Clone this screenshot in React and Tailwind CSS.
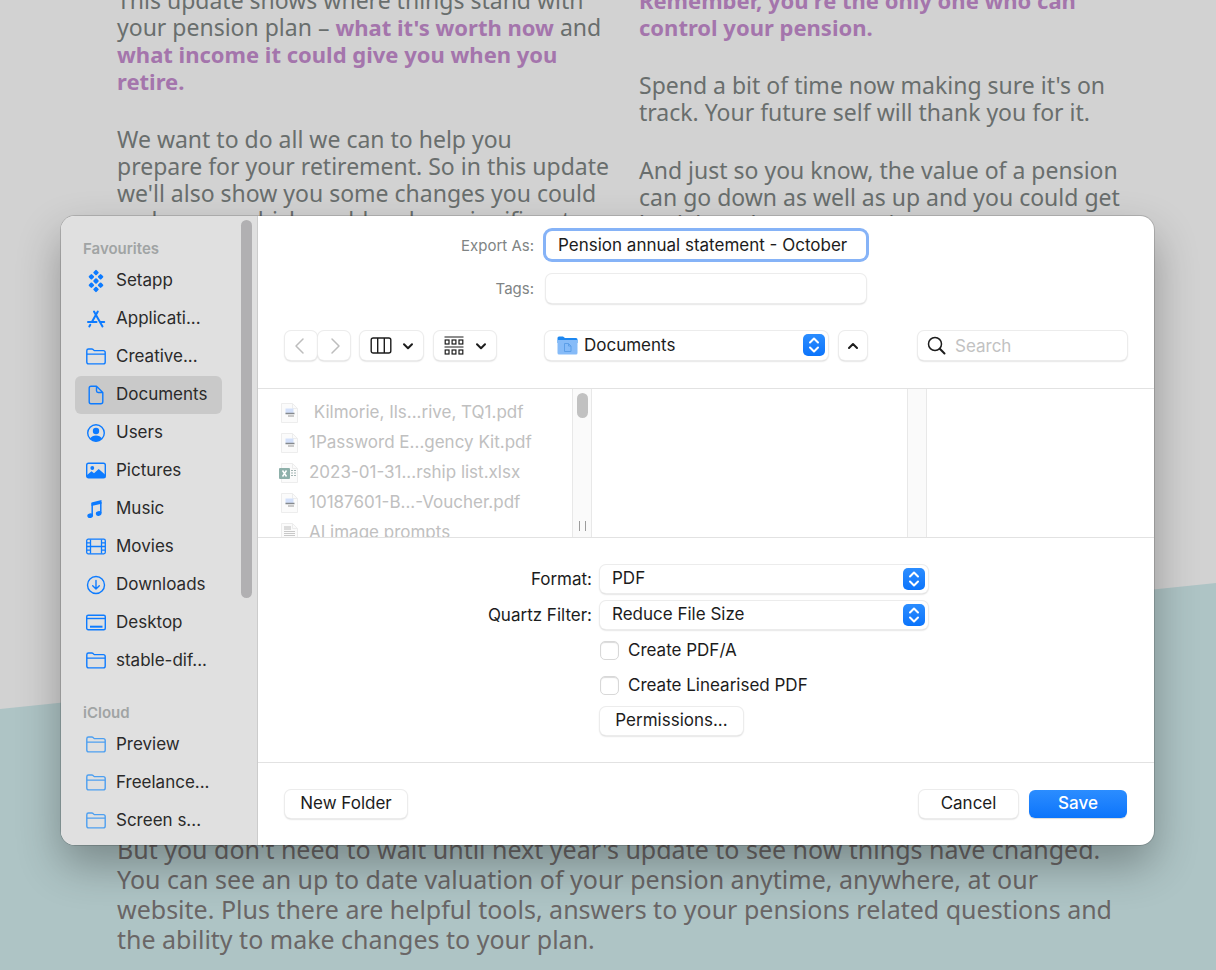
import { useState } from 'react';

const FAVOURITES = [
  { name: 'Setapp', icon: SetappIcon },
  { name: 'Applicati...', icon: AppsIcon },
  { name: 'Creative...', icon: FolderIcon },
  { name: 'Documents', icon: DocumentIcon },
  { name: 'Users', icon: UserIcon },
  { name: 'Pictures', icon: PictureIcon },
  { name: 'Music', icon: MusicIcon },
  { name: 'Movies', icon: MovieIcon },
  { name: 'Downloads', icon: DownloadIcon },
  { name: 'Desktop', icon: DesktopIcon },
  { name: 'stable-dif...', icon: FolderIcon },
];

const ICLOUD = ['Preview', 'Freelance...', 'Screen s...'];

const FILES = [
  { name: '\u00a0Kilmorie, Ils...rive, TQ1.pdf', type: 'pdf' },
  { name: '1Password E...gency Kit.pdf', type: 'pdf' },
  { name: '2023-01-31...rship list.xlsx', type: 'xlsx' },
  { name: '10187601-B...-Voucher.pdf', type: 'pdf' },
  { name: 'AI image prompts', type: 'text' },
];

const CONTROL = 'bg-white rounded-md shadow-[0_0_0_1px_#ececec,0_1px_2px_rgba(0,0,0,0.3)]';

export default function App() {
  return (
    <div className="relative h-screen min-h-[960px] overflow-hidden bg-[#d2d2d2]">
      <Statement />
      <div className="absolute inset-0 pl-[61px] pr-[62px] pt-[216px]">
        <ExportDialog />
      </div>
    </div>
  );
}

function Statement() {
  return (
    <div className="relative h-full font-['Noto_Sans','Open_Sans',sans-serif] text-[#696e6d]">
      <svg className="absolute inset-0 w-full h-full" viewBox="0 0 1216 970" preserveAspectRatio="none" aria-hidden="true">
        <path d="M0 709L1216 583V970H0Z" fill="#aec4c5" />
      </svg>
      <div className="relative h-full flex flex-col justify-between px-[117px] pb-4">
        <div className="-mt-[13px] grid grid-cols-[510px_510px] gap-3 text-[23px] leading-[27px] whitespace-nowrap">
          <div className="space-y-[31px]">
            <p>
              This update shows where things stand with<br />
              your pension plan – <Strong>what it's worth now</Strong> and<br />
              <Strong>what income it could give you when you</Strong><br />
              <Strong>retire.</Strong>
            </p>
            <p>
              We want to do all we can to help you<br />
              prepare for your retirement. So in this update<br />
              we'll also show you some changes you could<br />
              make now, which could make a significant
            </p>
          </div>
          <div className="space-y-[31px]">
            <p>
              <Strong>Remember, you're the only one who can</Strong><br />
              <Strong>control your pension.</Strong>
            </p>
            <p>
              Spend a bit of time now making sure it's on<br />
              track. Your future self will thank you for it.
            </p>
            <p>
              And just so you know, the value of a pension<br />
              can go down as well as up and you could get<br />
              back less than was put in.
            </p>
          </div>
        </div>
        <p className="text-[25px] leading-[30px] whitespace-nowrap text-[#6a6666]">
          But you don't need to wait until next year's update to see how things have changed.<br />
          You can see an up to date valuation of your pension anytime, anywhere, at our<br />
          website. Plus there are helpful tools, answers to your pensions related questions and<br />
          the ability to make changes to your plan.
        </p>
      </div>
    </div>
  );
}

function Strong({ children }) {
  return <strong className="font-bold text-[22px] text-[#a475ac]">{children}</strong>;
}

function ExportDialog() {
  const [name, setName] = useState('Pension annual statement - October');

  return (
    <div
      role="dialog"
      aria-label="Export"
      className="flex overflow-hidden rounded-[14px] bg-white font-['Inter','Liberation_Sans',sans-serif] text-[17px] text-[#1c1c1c] shadow-[0_0_0_1px_rgba(0,0,0,0.15),0_20px_44px_rgba(0,0,0,0.3)]"
    >
      <Sidebar />
      <div className="flex-1 min-w-0">
        <div className="px-[27px] pt-[15px] pb-7 border-b border-[#e2e2e2]">
          <div className="grid grid-cols-[1fr_320px_1fr] gap-x-3 gap-y-[15px] items-center">
            <label htmlFor="export-as" className="pt-0.5 text-right text-[15px] text-[#808484]">Export As:</label>
            <div className="h-7 px-3 flex bg-white rounded-md ring-3 ring-[#86b3f7]">
              <input
                id="export-as"
                type="text"
                value={name}
                onChange={(e) => setName(e.target.value)}
                className="w-full pt-0.5 bg-transparent focus:outline-none"
              />
            </div>
            <span />
            <label htmlFor="tags" className="pt-0.5 text-right text-[15px] text-[#808484]">Tags:</label>
            <input id="tags" type="text" className={`h-[29px] px-3 focus:outline-none ${CONTROL}`} />
          </div>
          <Toolbar />
        </div>
        <Browser />
        <Options />
        <div className="flex items-center px-[27px] py-[27px] gap-[11px]">
          <button className={`h-7 w-[122px] mr-auto ${CONTROL}`}>New Folder</button>
          <button className={`h-7 w-[99px] ${CONTROL}`}>Cancel</button>
          <button className="h-7 w-[98px] rounded-md bg-linear-to-b from-[#2b8dff] to-[#0a74fb] text-white font-medium shadow-[0_1px_1px_rgba(0,0,0,0.15)]">
            Save
          </button>
        </div>
      </div>
    </div>
  );
}

function Sidebar() {
  return (
    <div className="w-[197px] shrink-0 flex bg-[#e0e0e0] border-r border-[#cccccc]">
      <nav className="w-[180px] pt-5 pl-[14px] pr-[19px]">
        <h2 className="h-[26px] pl-2 text-[15px] leading-[26px] font-semibold text-[#a0a4a4]">Favourites</h2>
        {FAVOURITES.map(({ name, icon: Icon }) => (
          <SidebarItem key={name} name={name} selected={name === 'Documents'}>
            <Icon className="w-5 h-5 shrink-0 text-[#0d7bff]" />
          </SidebarItem>
        ))}
        <h2 className="mt-5 h-[26px] pl-2 text-[15px] leading-[26px] font-semibold text-[#a0a4a4]">iCloud</h2>
        {ICLOUD.map((name) => (
          <SidebarItem key={name} name={name}>
            <FolderIcon className="w-5 h-5 shrink-0 text-[#4d9ff0]" />
          </SidebarItem>
        ))}
      </nav>
      <div className="mt-1 w-[11px] h-[378px] rounded-full bg-[#b1b0b2]" />
    </div>
  );
}

function SidebarItem({ name, selected, children }) {
  return (
    <button
      className={`flex items-center gap-[10px] w-full h-[38px] pl-[11px] rounded-md text-left whitespace-nowrap text-[#2a2a2a] ${
        selected ? 'bg-[#c9c9c9]' : ''
      }`}
    >
      {children}
      {name}
    </button>
  );
}

function Toolbar() {
  return (
    <div className="mt-7 grid grid-cols-[1fr_322px_1fr] items-center">
      <div className="flex">
        <button aria-label="Back" className={`h-[29px] w-8 mr-px flex items-center justify-center text-[#bdbdbd] ${CONTROL}`}>
          <Chevron className="w-5 h-5" d="M12 3L5 10l7 7" thin />
        </button>
        <button aria-label="Forward" className={`h-[29px] w-8 mr-[10px] flex items-center justify-center text-[#bdbdbd] ${CONTROL}`}>
          <Chevron className="w-5 h-5" d="M8 3l7 7-7 7" thin />
        </button>
        <button aria-label="View" className={`h-[29px] w-[63px] mr-[11px] flex items-center justify-center gap-[10px] ${CONTROL}`}>
          <svg className="w-[22px] h-5" viewBox="0 0 22 20" fill="none" stroke="currentColor" strokeWidth="1.4">
            <rect x="1.2" y="2" width="19.6" height="15" rx="2" />
            <path d="M7.7 2v15M14.3 2v15" />
          </svg>
          <Chevron className="w-3 h-3" d="M2 4.3l4 4 4-4" small />
        </button>
        <button aria-label="Group" className={`h-[29px] w-[62px] flex items-center justify-center gap-[10px] ${CONTROL}`}>
          <svg className="w-[22px] h-5" viewBox="0 0 22 20" fill="none" stroke="currentColor" strokeWidth="1.2">
            <path d="M1.5 1h19M1.5 11h19" />
            <rect x="2.2" y="4" width="3.8" height="4" />
            <rect x="9.1" y="4" width="3.8" height="4" />
            <rect x="16" y="4" width="3.8" height="4" />
            <rect x="2.2" y="14" width="3.8" height="4" />
            <rect x="9.1" y="14" width="3.8" height="4" />
            <rect x="16" y="14" width="3.8" height="4" />
          </svg>
          <Chevron className="w-3 h-3" d="M2 4.3l4 4 4-4" small />
        </button>
      </div>
      <div className="flex justify-between">
        <div className="relative w-[283px]">
          <select aria-label="Location" className={`block appearance-none h-[29px] w-full pl-[39px] ${CONTROL}`}>
            <option>Documents</option>
          </select>
          <svg className="absolute left-3 top-1 w-[21px] h-[21px] pointer-events-none" viewBox="0 0 21 21">
            <path d="M.5 3Q.5 1.5 2 1.5h4l2 1.5h11Q20.5 3 20.500 4.500V8H.5Z" fill="#1d87f0" />
            <path d="M.5 5h20v13q0 1.500-1.500 1.500H2Q.5 19.500.5 18Z" fill="#86bbf8" />
            <path d="M7.500 8.500h4L14 11v5.500H7.500ZM11.500 8.500V11H14" fill="none" stroke="#5d9fe8" />
          </svg>
          <Stepper />
        </div>
        <button aria-label="Collapse" className={`h-[29px] w-7 flex items-center justify-center ${CONTROL}`}>
          <Chevron className="w-3 h-3" d="M2 8l4-4 4 4" small />
        </button>
      </div>
      <label className={`justify-self-end w-[209px] h-[29px] px-[9px] flex items-center gap-[9px] ${CONTROL}`}>
        <svg className="w-[19px] h-[19px] shrink-0" viewBox="0 0 19 19" fill="none" stroke="currentColor" strokeWidth="1.5" strokeLinecap="round">
          <circle cx="8" cy="8" r="6.5" />
          <path d="M12.800 12.800L17.500 17.500" strokeWidth="2" />
        </svg>
        <input type="search" placeholder="Search" aria-label="Search" className="w-full min-w-0 pt-0.5 bg-transparent placeholder-[#c2c2c2] focus:outline-none" />
      </label>
    </div>
  );
}

function Browser() {
  return (
    <div className="grid grid-cols-[314px_20px_315px_20px_1fr] h-[149px] overflow-hidden border-b border-[#e2e2e2]">
      <ul className="pt-[9px] pl-[21px] overflow-hidden">
        {FILES.map((file) => (
          <li key={file.name} className="flex items-center gap-[9px] h-[30px] whitespace-nowrap text-[#c0c0c0]">
            <FileIcon type={file.type} />
            {file.name}
          </li>
        ))}
      </ul>
      <div className="flex flex-col items-center justify-between pt-1 pb-[6px] bg-[#fafafa] border-x border-[#e8e8e8]">
        <div className="w-[11px] h-[25px] rounded-full bg-[#c1c1c1]" />
        <div className="w-[7px] h-[10px] border-x border-[#9c9c9c]" />
      </div>
      <div />
      <div className="bg-[#fafafa] border-x border-[#e8e8e8]" />
      <div />
    </div>
  );
}

function Options() {
  return (
    <div className="py-[27px] grid grid-cols-[108px_328px] justify-center gap-x-2 gap-y-2 items-center border-b border-[#e2e2e2]">
      <label htmlFor="format" className="pt-0.5 text-right whitespace-nowrap">Format:</label>
      <div className="relative">
        <select id="format" className={`block appearance-none h-7 w-full pl-3 ${CONTROL}`}>
          <option>PDF</option>
        </select>
        <Stepper />
      </div>
      <label htmlFor="filter" className="pt-0.5 text-right whitespace-nowrap">Quartz Filter:</label>
      <div className="relative">
        <select id="filter" className={`block appearance-none h-7 w-full pl-3 ${CONTROL}`}>
          <option>Reduce File Size</option>
        </select>
        <Stepper />
      </div>
      <Checkbox label="Create PDF/A" />
      <Checkbox label="Create Linearised PDF" />
      <button className={`col-start-2 h-7 w-[143px] ${CONTROL}`}>Permissions...</button>
    </div>
  );
}

function Checkbox({ label }) {
  return (
    <label className="col-start-2 flex items-center gap-[9px] h-[27px]">
      <input
        type="checkbox"
        className="appearance-none w-[19px] h-[19px] rounded-[5px] border border-[#d8d8d8] bg-white shadow-[inset_0_1px_1px_rgba(0,0,0,0.15)] checked:bg-[#0d7bff]"
      />
      {label}
    </label>
  );
}

function Stepper() {
  return (
    <span className="absolute right-[3px] top-[3px] w-[22px] h-[22px] rounded-[5px] bg-linear-to-b from-[#2b8dff] to-[#0a74fb] pointer-events-none">
      <svg viewBox="0 0 22 22" fill="none" stroke="white" strokeWidth="2" strokeLinecap="round" strokeLinejoin="round">
        <path d="M7 8.500L11 4.500l4 4M7 13.500l4 4 4-4" />
      </svg>
    </span>
  );
}

function Chevron({ d, className, thin, small }) {
  return (
    <svg className={className} viewBox={small ? '0 0 12 12' : '0 0 20 20'} fill="none" stroke="currentColor" strokeWidth={thin ? 1.5 : 2} strokeLinecap="round" strokeLinejoin="round">
      <path d={d} />
    </svg>
  );
}

function FileIcon({ type }) {
  return (
    <svg className="w-[21px] h-5 shrink-0" viewBox="0 0 21 20">
      <path d="M2.500.5h11l5 5v14h-16Z" fill="#fbfbfb" stroke="#ededed" />
      <path d="M13.500.5v5h5" fill="none" stroke="#ededed" />
      {type === 'pdf' && (
        <>
          <path d="M6.500 5.500h8v5h-8Z" fill="#d3e0fa" />
          <path d="M6.500 10.500h9" stroke="#85898d" strokeWidth="1.5" />
          <path d="M9 13h6" stroke="#cacaca" strokeWidth="2" />
        </>
      )}
      {type === 'xlsx' && (
        <>
          <path d="M12 7.500h5M12 10h5M12 12.500h5" stroke="#a3b5b3" strokeWidth="1.2" strokeDasharray="2 1" />
          <rect x="0" y="5" width="11" height="11" rx="1" fill="#8eb0aa" />
          <path d="M3.500 7.500l4 6M7.500 7.500l-4 6" stroke="white" strokeWidth="1.5" />
        </>
      )}
      {type === 'text' && (
        <>
          <path d="M5 4h7M5 6h7" stroke="#bcbcbc" />
          <path d="M5 8.500h11M5 10.500h11M5 12.500h11M5 14.500h9" stroke="#c8c8c8" />
        </>
      )}
    </svg>
  );
}

function SetappIcon({ className }) {
  const tiles = [[10, 1.6], [5.4, 5.8], [14.6, 5.8], [10, 10], [5.4, 14.2], [14.6, 14.2], [10, 18.4]];
  return (
    <svg className={`overflow-visible ${className}`} viewBox="0 0 20 20" fill="currentColor">
      {tiles.map(([x, y]) => (
        <rect key={`${x}-${y}`} x={x - 2.2} y={y - 2.2} width="4.4" height="4.4" rx="1" transform={`rotate(45 ${x} ${y})`} />
      ))}
    </svg>
  );
}

function AppsIcon({ className }) {
  return (
    <svg className={className} viewBox="0 0 20 20" fill="none" stroke="currentColor" strokeWidth="2" strokeLinecap="round">
      <path d="M8 2.500l8.500 15M11.800 2.500L6 12.800M4.300 15.800l-1 1.700M2 13h8.500M15 13h3.200" />
    </svg>
  );
}

function FolderIcon({ className }) {
  return (
    <svg className={className} viewBox="0 0 20 20" fill="none" stroke="currentColor" strokeWidth="1.4" strokeLinejoin="round">
      <path d="M.8 15V3.700Q.8 2 2.500 2h3.300q.8 0 1.300.5l.8.700q.5.400 1.200.4h8.200q1.900 0 1.900 1.800V15q0 1.900-1.900 1.900H2.700Q.8 16.900.8 15ZM.8 7.100h18.400" />
    </svg>
  );
}

function DocumentIcon({ className }) {
  return (
    <svg className={className} viewBox="0 0 20 20" fill="none" stroke="currentColor" strokeWidth="1.4" strokeLinejoin="round">
      <path d="M5 1.200h5.500L16.800 7.500v9.300q0 2-2 2H5q-1.800 0-1.800-2V3.200q0-2 1.800-2ZM10.500 1.200v4.600q0 1.700 1.700 1.700h4.600" />
    </svg>
  );
}

function UserIcon({ className }) {
  return (
    <svg className={className} viewBox="0 0 20 20" fill="currentColor">
      <circle cx="10" cy="10" r="8.300" fill="none" stroke="currentColor" strokeWidth="1.4" />
      <circle cx="10" cy="8" r="3.200" />
      <path d="M4 15.500q2-3 6-3t6 3q-2.500 2.800-6 2.800t-6-2.800Z" />
    </svg>
  );
}

function PictureIcon({ className }) {
  return (
    <svg className={className} viewBox="0 0 20 20" fill="currentColor">
      <rect x=".7" y="2.200" width="18.600" height="14.600" rx="1.800" fill="none" stroke="currentColor" strokeWidth="1.4" />
      <circle cx="6.300" cy="7" r="1.900" />
      <path d="M1 14l4.500-3.800 2.500 2L12.700 8 19 13.500v3H1Z" />
    </svg>
  );
}

function MusicIcon({ className }) {
  return (
    <svg className={className} viewBox="0 0 20 20" fill="currentColor">
      <path d="M5.500 3.400L15.500 1v3.700L5.500 7Z" />
      <path d="M6.200 4v12M14.800 3v11" stroke="currentColor" strokeWidth="1.5" />
      <ellipse cx="4.200" cy="16.700" rx="2.900" ry="2.300" transform="rotate(-15 4.200 16.700)" />
      <ellipse cx="12.700" cy="14.500" rx="2.900" ry="2.300" transform="rotate(-15 12.700 14.500)" />
    </svg>
  );
}

function MovieIcon({ className }) {
  return (
    <svg className={className} viewBox="0 0 20 20" fill="none" stroke="currentColor" strokeWidth="1.3">
      <rect x=".7" y="2.200" width="18.600" height="14.600" rx="1.5" />
      <path d="M4.500 2.500v14M15.500 2.500v14M4.500 9.500h11M1 5.800h3.500M1 9.500h3.500M1 13.200h3.500M15.500 5.800H19M15.500 9.500H19M15.500 13.200H19" />
    </svg>
  );
}

function DownloadIcon({ className }) {
  return (
    <svg className={className} viewBox="0 0 20 20" fill="none" stroke="currentColor" strokeWidth="1.4" strokeLinecap="round" strokeLinejoin="round">
      <circle cx="10" cy="10" r="8.500" />
      <path d="M10 5.500v8.500M6.700 10.800L10 14.100l3.300-3.300" />
    </svg>
  );
}

function DesktopIcon({ className }) {
  return (
    <svg className={className} viewBox="0 0 20 20" fill="none" stroke="currentColor" strokeWidth="1.4">
      <rect x=".7" y="2.200" width="18.600" height="14.600" rx="1.5" />
      <path d="M1 5.500h18" />
      <path d="M4 13.700h12.500" strokeWidth="2" />
    </svg>
  );
}
